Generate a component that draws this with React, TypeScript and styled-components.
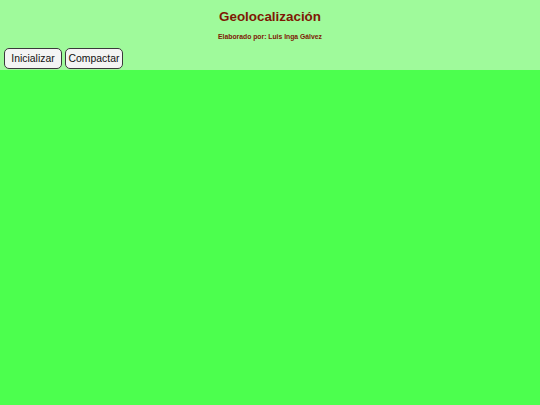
import styled, { createGlobalStyle } from "styled-components";

const GlobalStyle = createGlobalStyle`
  html, body {
    margin: 0;
    padding: 0;
    background: #4cff4e;
    font-family: "Liberation Sans", Arial, sans-serif;
  }
`;

const Page = styled.div`
  display: flex;
  flex-direction: column;
  min-height: 100vh;
`;

const Header = styled.header`
  display: flex;
  flex-direction: column;
  height: 70px;
  box-sizing: border-box;
  padding-top: 9px;
  background: #9ffa9b;
`;

const Title = styled.h1`
  margin: 0;
  text-align: center;
  font-size: 13.4px;
  line-height: 16px;
  font-weight: bold;
  color: #7e1804;
`;

const Subtitle = styled.h2`
  margin: 8px 0 0;
  text-align: center;
  font-size: 6.8px;
  line-height: 8px;
  font-weight: bold;
  color: #7e1804;
`;

const Toolbar = styled.div`
  display: flex;
  gap: 3px;
  margin-top: 7px;
  padding-left: 4px;
`;

const Button = styled.button`
  width: 58px;
  height: 21px;
  padding: 0;
  box-sizing: border-box;
  font-family: "Liberation Sans", Arial, sans-serif;
  font-size: 10.4px;
  color: #111;
  background: #f4f4f4;
  border: 1px solid #3a3a3a;
  border-radius: 5px;
`;

const Map = styled.main`
  flex: 1;
  background: #4cff4e;
`;

export default function App() {
  return (
    <Page>
      <GlobalStyle />
      <Header>
        <Title>Geolocalización</Title>
        <Subtitle>Elaborado por: Luis Inga Gálvez</Subtitle>
        <Toolbar>
          <Button>Inicializar</Button>
          <Button>Compactar</Button>
        </Toolbar>
      </Header>
      <Map />
    </Page>
  );
}
